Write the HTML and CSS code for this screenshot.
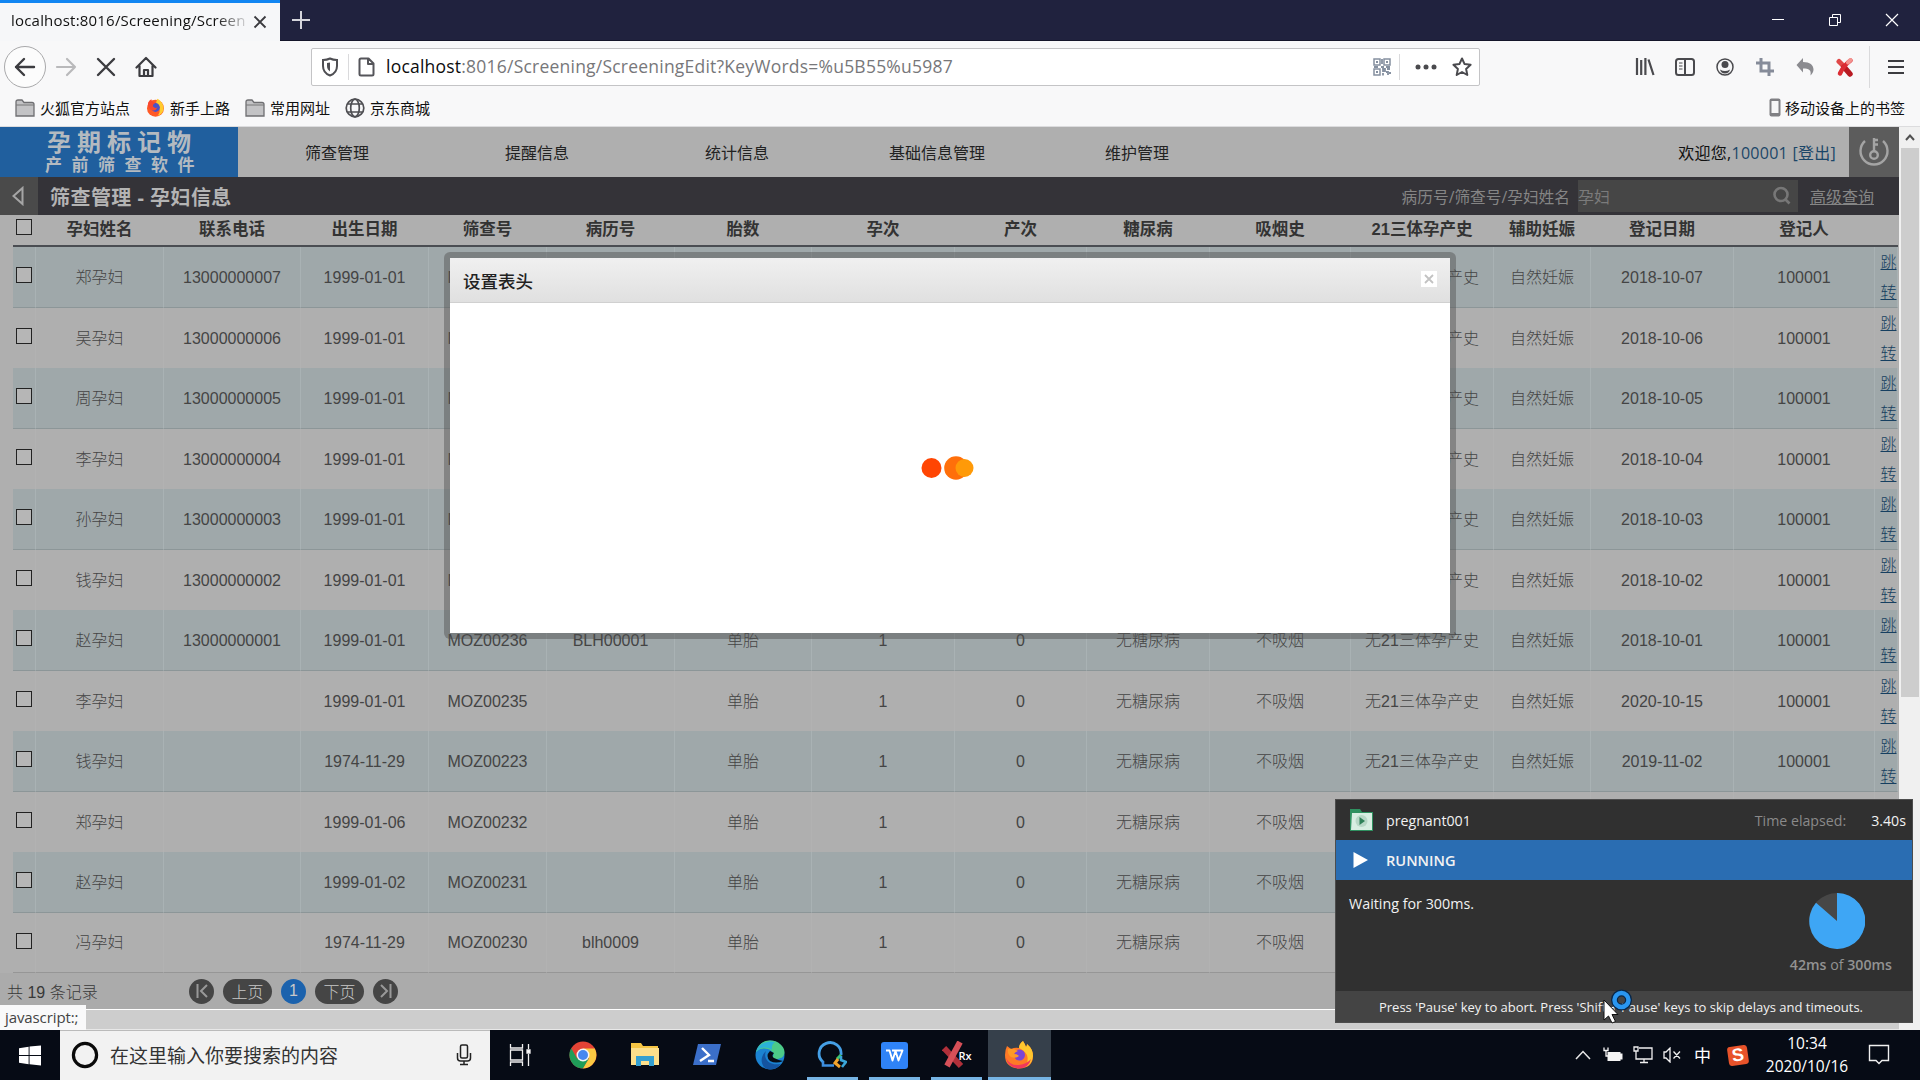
FILE: index.html
```html
<!DOCTYPE html>
<html lang="zh-CN">
<head>
<meta charset="utf-8">
<title>筛查管理 - 孕妇信息</title>
<link rel="stylesheet" href="styles.css">
</head>
<body>
<div class="desktop">
  <header class="tabbar">
    <div class="tab"><span class="tab-title">localhost:8016/Screening/Screen</span>
      <svg class="tab-close" width="14" height="14" viewBox="0 0 14 14"><path d="M1.500 1.500l11 11M12.500 1.500l-11 11" stroke="#3a3a3f" stroke-width="1.800"/></svg></div>
    <svg class="newtab" width="20" height="20" viewBox="0 0 20 20"><path d="M10 1v18M1 10h18" stroke="#d5d5dc" stroke-width="2"/></svg>
    <div class="winctl">
      <svg width="14" height="14" viewBox="0 0 14 14"><path d="M1 6.500h12" stroke="#fff"/></svg>
      <svg width="14" height="14" viewBox="0 0 14 14" fill="none" stroke="#fff"><path d="M1.500 4.500h8v8h-8zM4.500 4V1.500h8v8H10"/></svg>
      <svg width="14" height="14" viewBox="0 0 14 14"><path d="M1 1l12 12M13 1L1 13" stroke="#fff" stroke-width="1.200"/></svg>
    </div>
  </header>

  <div class="toolbar">
    <div class="navbtns">
      <span class="back"><svg width="22" height="20" viewBox="0 0 22 20" fill="none" stroke="#3c3c40" stroke-width="2.400" stroke-linecap="round" stroke-linejoin="round"><path d="M20 10H2M10 2L2 10l8 8"/></svg></span>
      <span><svg width="22" height="20" viewBox="0 0 22 20" fill="none" stroke="#b9b9bb" stroke-width="2.200" stroke-linecap="round" stroke-linejoin="round"><path d="M2 10h18M12 2l8 8-8 8"/></svg></span>
      <span><svg width="20" height="20" viewBox="0 0 20 20" fill="none" stroke="#3c3c40" stroke-width="2.400" stroke-linecap="round"><path d="M2 2l16 16M18 2L2 18"/></svg></span>
      <span><svg width="22" height="22" viewBox="0 0 22 22" fill="none" stroke="#3c3c40" stroke-width="2.200" stroke-linejoin="round" stroke-linecap="round"><path d="M1.500 11.500L11 2l9.500 9.500M4.500 10v10h13V10M9 20v-6h4v6"/></svg></span>
    </div>
    <div class="urlbar">
      <svg class="shield" width="18" height="20" viewBox="0 0 18 20" fill="none" stroke="#4e4e52" stroke-width="2"><path d="M9 1.500C7 2.500 4 3 2 3v6c0 5 3 8 7 9.500C13 17 16 14 16 9V3c-2 0-5-.5-7-1.500z"/><path d="M9 5.500v9c-2-1.500-3-3-3-5.500v-3z" fill="#4e4e52" stroke="none"/></svg>
      <i class="sep"></i>
      <svg class="doc" width="18" height="20" viewBox="0 0 18 20" fill="none" stroke="#55555a" stroke-width="2" stroke-linejoin="round"><path d="M4 1.500h7.500l5 5V17a1.500 1.500 0 0 1-1.500 1.500H4A1.500 1.500 0 0 1 2.500 17V3A1.500 1.500 0 0 1 4 1.500zM11 2v5h5"/></svg>
      <span class="url"><b>localhost</b>:8016/Screening/ScreeningEdit?KeyWords=%u5B55%u5987</span>
      <svg class="qr" width="18" height="18" viewBox="0 0 18 18" fill="none" stroke="#8590a0" stroke-width="1.500"><path d="M1 1h6v6H1zM11 1h6v6h-6zM1 11h6v6H1z"/><path d="M3 4h2M13 4h2M3 14h2M9 1v5M8 9h3M1 9h4M13 9h4M10 11h2v2h-2zM14 11h3M13 14h2v3M16 15h2M10 15v2.500" stroke-width="1.800"/></svg>
      <i class="sep"></i>
      <svg class="dots" width="22" height="6" viewBox="0 0 22 6" fill="#4a4a4e"><circle cx="3" cy="3" r="2.500"/><circle cx="11" cy="3" r="2.500"/><circle cx="19" cy="3" r="2.500"/></svg>
      <svg class="star" width="20" height="20" viewBox="0 0 20 20" fill="none" stroke="#4a4a4e" stroke-width="2" stroke-linejoin="round"><path d="M10 1.500l2.600 5.600 6 .7-4.500 4.100 1.200 6.100L10 15l-5.300 3 1.200-6.100L1.400 7.800l6-.7z"/></svg>
    </div>
    <div class="tools">
      <span><svg width="20" height="20" viewBox="0 0 20 20" stroke="#4a4a4e" stroke-width="2.200"><path d="M2 1v17M6.200 3v15M10.400 1v17M13.500 2.500l5 15.500"/></svg></span>
      <span><svg width="20" height="18" viewBox="0 0 20 18" fill="none" stroke="#4a4a4e" stroke-width="2"><rect x="1" y="1" width="18" height="16" rx="2.500"/><path d="M10 1v16"/><path d="M4 5h3.500M4 8h3.500M4 11h3.500" stroke-width="1.200"/></svg></span>
      <span><svg width="18" height="18" viewBox="0 0 18 18"><circle cx="9" cy="9" r="8" fill="none" stroke="#4a4a4e" stroke-width="1.500"/><circle cx="9" cy="6.500" r="3.500" fill="#4a4a4e"/><path d="M4 11.500q5 3 10 0-1 4-5 4t-5-4z" fill="#4a4a4e"/></svg></span>
      <span><svg width="18" height="18" viewBox="0 0 18 18" fill="none" stroke="#858b99" stroke-width="3"><path d="M5 0v13H18M0 5h13V18"/></svg></span>
      <span><svg width="18" height="18" viewBox="0 0 18 18"><path d="M7 0v4c7 0 10.500 3 10.500 7.500 0 2-1 4-3 6 1-5.500-1.500-7-7.500-7v4L.5 7z" fill="#8b8b90"/></svg></span>
      <span><svg width="18" height="20" viewBox="0 0 18 20" fill="none" stroke-linecap="round" stroke-width="5"><path d="M3 4.500L8 9.500" stroke="#e04848"/><path d="M8 10l6 7" stroke="#b81a22" stroke-width="5.500"/><path d="M14.500 3.500Q8 8 4 16.500" stroke="#dc2c34" stroke-width="4.500"/><path d="M14.500 3l-2.500 2.500" stroke="#f49490" stroke-width="4"/></svg></span>
      <i class="sep"></i>
      <svg class="burger" width="16" height="16" viewBox="0 0 16 16" stroke="#3c3c40" stroke-width="2.200"><path d="M0 2h16M0 8h16M0 14h16"/></svg>
    </div>
  </div>

  <div class="bookmarks">
    <span class="bm"><svg width="20" height="18" viewBox="0 0 20 18"><path d="M1 3q0-2 2-2h4l2 2.500h8q2 0 2 2V17H1z" fill="#c3c3c5" stroke="#6f6f72" stroke-width="1.300"/><path d="M1 6h18" stroke="#777"/></svg>火狐官方站点</span>
    <span class="bm fx"><svg width="19" height="19" viewBox="0 0 28 28"><circle cx="14" cy="15" r="12.500" fill="#ff5a26"/><path d="M17 1c4 2 9 8 9 14a12 12 0 0 1-9 11c5-6 4-12-2-15 0-4 0-7 2-10z" fill="#ffcb2e"/><circle cx="14" cy="14" r="6.500" fill="#4a52c8"/><path d="M3 7q2-4 5-5 0 4 6 5-4 2-4 5 3 4 7 2-3 6-9 4-6-4-5-11z" fill="#f9482f"/></svg>新手上路</span>
    <span class="bm f2"><svg width="20" height="18" viewBox="0 0 20 18"><path d="M1 3q0-2 2-2h4l2 2.500h8q2 0 2 2V17H1z" fill="#c3c3c5" stroke="#6f6f72" stroke-width="1.300"/><path d="M1 6h18" stroke="#777"/></svg>常用网址</span>
    <span class="bm gl"><svg width="20" height="20" viewBox="0 0 20 20" fill="none" stroke="#4f4f53" stroke-width="1.700"><circle cx="10" cy="10" r="8.800"/><ellipse cx="10" cy="10" rx="4.300" ry="8.800"/><path d="M2.500 6h15M2.500 14h15"/></svg>京东商城</span>
    <span class="bm mobile"><svg width="12" height="19" viewBox="0 0 12 19"><rect x=".5" y=".5" width="11" height="18" rx="2" fill="#808084"/><rect x="2.500" y="3" width="7" height="12" fill="#f6f6f7"/></svg>移动设备上的书签</span>
  </div>

  <div class="viewport">
    <main class="page">
      <div class="apphead">
        <div class="logo"><div class="l1">孕期标记物</div><div class="l2">产前筛查软件</div></div>
        <nav class="menu"><a>筛查管理</a><a>提醒信息</a><a>统计信息</a><a>基础信息管理</a><a>维护管理</a></nav>
        <div class="welcome">欢迎您,<a>100001 [登出]</a></div>
        <div class="keytile"><svg width="32" height="32" viewBox="0 0 32 32" fill="none" stroke="#a4a4a4" stroke-width="2.400"><path d="M7 5a13.500 13.500 0 1 0 18 0"/><circle cx="16" cy="19" r="3.800"/><path d="M16 15V2M16 4h4M16 8.500h4"/></svg></div>
      </div>
      <div class="titlebar">
        <div class="goback"><svg width="12" height="20" viewBox="0 0 12 20" fill="none" stroke="#a5a5a5" stroke-width="2"><path d="M10.500 2v16L1.500 10z"/></svg></div>
        <h1>筛查管理 - 孕妇信息</h1>
        <span class="slabel">病历号/筛查号/孕妇姓名</span>
        <div class="sbox"><span>孕妇</span><svg width="20" height="20" viewBox="0 0 20 20" fill="none" stroke="#777" stroke-width="2.600"><circle cx="9" cy="8.500" r="6.500"/><path d="M13.500 13.500l4 4"/></svg></div>
        <a class="adv">高级查询</a>
      </div>
      <table class="grid">
        <colgroup><col class="c23"><col class="c128"><col class="c137"><col class="c128"><col class="c118"><col class="c128"><col class="c137"><col class="c143"><col class="c132"><col class="c123"><col class="c141"><col class="c143"><col class="c97"><col class="c143"><col class="c141"><col class="c23"></colgroup>
        <thead><tr><th><i class="cb"></i><th>孕妇姓名<th>联系电话<th>出生日期<th>筛查号<th>病历号<th>胎数<th>孕次<th>产次<th>糖尿病<th>吸烟史<th>21三体孕产史<th>辅助妊娠<th>登记日期<th>登记人<th></tr></thead>
        <tbody>
        <tr><td><i class="cb"></i><td>郑孕妇<td>13000000007<td>1999-01-01<td>MOZ00242<td>BLH00007<td>单胎<td>1<td>0<td>无糖尿病<td>不吸烟<td>无21三体孕产史<td>自然妊娠<td>2018-10-07<td>100001<td><a>跳转</a></tr>
        <tr><td><i class="cb"></i><td>吴孕妇<td>13000000006<td>1999-01-01<td>MOZ00241<td>BLH00006<td>单胎<td>1<td>0<td>无糖尿病<td>不吸烟<td>无21三体孕产史<td>自然妊娠<td>2018-10-06<td>100001<td><a>跳转</a></tr>
        <tr><td><i class="cb"></i><td>周孕妇<td>13000000005<td>1999-01-01<td>MOZ00240<td>BLH00005<td>单胎<td>1<td>0<td>无糖尿病<td>不吸烟<td>无21三体孕产史<td>自然妊娠<td>2018-10-05<td>100001<td><a>跳转</a></tr>
        <tr><td><i class="cb"></i><td>李孕妇<td>13000000004<td>1999-01-01<td>MOZ00239<td>BLH00004<td>单胎<td>1<td>0<td>无糖尿病<td>不吸烟<td>无21三体孕产史<td>自然妊娠<td>2018-10-04<td>100001<td><a>跳转</a></tr>
        <tr><td><i class="cb"></i><td>孙孕妇<td>13000000003<td>1999-01-01<td>MOZ00238<td>BLH00003<td>单胎<td>1<td>0<td>无糖尿病<td>不吸烟<td>无21三体孕产史<td>自然妊娠<td>2018-10-03<td>100001<td><a>跳转</a></tr>
        <tr><td><i class="cb"></i><td>钱孕妇<td>13000000002<td>1999-01-01<td>MOZ00237<td>BLH00002<td>单胎<td>1<td>0<td>无糖尿病<td>不吸烟<td>无21三体孕产史<td>自然妊娠<td>2018-10-02<td>100001<td><a>跳转</a></tr>
        <tr><td><i class="cb"></i><td>赵孕妇<td>13000000001<td>1999-01-01<td>MOZ00236<td>BLH00001<td>单胎<td>1<td>0<td>无糖尿病<td>不吸烟<td>无21三体孕产史<td>自然妊娠<td>2018-10-01<td>100001<td><a>跳转</a></tr>
        <tr><td><i class="cb"></i><td>李孕妇<td><td>1999-01-01<td>MOZ00235<td><td>单胎<td>1<td>0<td>无糖尿病<td>不吸烟<td>无21三体孕产史<td>自然妊娠<td>2020-10-15<td>100001<td><a>跳转</a></tr>
        <tr><td><i class="cb"></i><td>钱孕妇<td><td>1974-11-29<td>MOZ00223<td><td>单胎<td>1<td>0<td>无糖尿病<td>不吸烟<td>无21三体孕产史<td>自然妊娠<td>2019-11-02<td>100001<td><a>跳转</a></tr>
        <tr><td><i class="cb"></i><td>郑孕妇<td><td>1999-01-06<td>MOZ00232<td><td>单胎<td>1<td>0<td>无糖尿病<td>不吸烟<td><td><td><td><td></tr>
        <tr><td><i class="cb"></i><td>赵孕妇<td><td>1999-01-02<td>MOZ00231<td><td>单胎<td>1<td>0<td>无糖尿病<td>不吸烟<td><td><td><td><td></tr>
        <tr><td><i class="cb"></i><td>冯孕妇<td><td>1974-11-29<td>MOZ00230<td>blh0009<td>单胎<td>1<td>0<td>无糖尿病<td>不吸烟<td><td><td><td><td></tr>
        </tbody>
      </table>
      <div class="pager">
        <span class="total">共 19 条记录</span>
        <span class="pg round"><svg width="12" height="14" viewBox="0 0 12 14" fill="none" stroke="#999" stroke-width="2"><path d="M1.500 0v14M11 1L5 7l6 6"/></svg></span>
        <span class="pg">上页</span><span class="pg round cur">1</span><span class="pg">下页</span>
        <span class="pg round"><svg width="12" height="14" viewBox="0 0 12 14" fill="none" stroke="#999" stroke-width="2"><path d="M10.500 0v14M1 1l6 6-6 6"/></svg></span>
      </div>
    </main>
    <div class="vscroll"><svg width="10" height="7" viewBox="0 0 10 7" fill="none" stroke="#505050" stroke-width="2"><path d="M1 6l4-4.500L9 6"/></svg><div class="thumb"></div></div>
    <div class="hscroll"></div>
    <div class="status">javascript:;</div>

    <section class="dialog">
      <div class="dlg-head"><span>设置表头</span><i class="dlg-x"><svg width="10" height="10" viewBox="0 0 10 10"><path d="M1 1l8 8M9 1L1 9" stroke="#c2c2c2" stroke-width="1.800"/></svg></i></div>
      <div class="dlg-body"><svg width="54" height="26" viewBox="0 0 54 26"><circle cx="11.500" cy="13" r="10" fill="#ff4503"/><circle cx="36" cy="13" r="11.800" fill="#ff6f0a"/><circle cx="44.500" cy="13" r="9" fill="#ff9a08"/></svg></div>
    </section>
  </div>

  <footer class="taskbar">
    <div class="start"><svg width="22" height="21" viewBox="0 0 24 22" fill="#fff"><path d="M0 3l10.500-1.500v9H0zM11.500 1.300L24 0v10.500H11.500zM0 11.500h10.500v9L0 19zM11.500 11.500H24V22l-12.500-1.500z"/></svg></div>
    <div class="search"><svg width="28" height="28" viewBox="0 0 28 28" fill="none" stroke="#0a0a0a" stroke-width="3.200"><circle cx="14" cy="14" r="11.600"/></svg><span>在这里输入你要搜索的内容</span><svg class="mic" width="16" height="22" viewBox="0 0 16 22" fill="none" stroke="#222" stroke-width="1.500"><rect x="4.500" y="1" width="7" height="13" rx="1.500"/><path d="M1.500 9v5q0 3 3 3h7q3 0 3-3V9M8 17v3.500M4 20.500h8"/></svg></div>
    <div class="apps">
      <span><svg width="22" height="22" viewBox="0 0 22 22" fill="none" stroke="#f0f0f0" stroke-width="1.300"><path d="M1.500 0v4h12V0M1.500 6h12v10h-12zM1.500 22v-4h12v4M19.500 0v5M19.500 10v12"/><path d="M18 6h3v3h-3z" fill="#fff"/></svg></span>
      <span><svg width="28" height="28" viewBox="0 0 28 28"><circle cx="14" cy="14" r="13.500" fill="#e34335"/><path d="M2.300 7.250A13.500 13.500 0 0 0 14 27.500L20 17.500 8 17.500z" fill="#1f9d58"/><path d="M14 27.500A13.500 13.500 0 0 0 25.700 7.500H14l6 10z" fill="#fbc942"/><circle cx="14" cy="14" r="6.500" fill="#f4f4f4"/><circle cx="14" cy="14" r="5" fill="#4688f1"/></svg></span>
      <span><svg width="28" height="26" viewBox="0 0 28 26"><path d="M0 1h10l2 3h15v19H0z" fill="#f6c644"/><path d="M0 6h28v17H0z" fill="#fde08b"/><path d="M5 14h18v10h-5v-5h-8v5H5z" fill="#35a0d0"/></svg></span>
      <span><svg width="30" height="24" viewBox="0 0 30 24"><path d="M6 1h23l-5 21H1z" fill="#3b6fc9"/><path d="M10 5l7 7-9 6M16 18h6" stroke="#fff" stroke-width="2.400" fill="none"/></svg></span>
      <span><svg width="30" height="30" viewBox="0 0 30 30"><circle cx="15" cy="15" r="14.500" fill="#1b83d2"/><path d="M1 12C3 4 9 .5 15 .5 24 .5 29.500 7 29.500 12c0 5-4 7-8 7-5 0-4-2-3-4C19 10 8 5 1 12z" fill="#4ccb88"/><path d="M1 12C4 3 13 0 20 2q-4 3-3 8C11 5 4 8 1 12z" fill="#2bb2d8"/><path d="M11 11c-3 7 2 15 15 13-4 5-10 6-14 5C5 26 5 16 11 11z" fill="#1454a0"/><path d="M15 11q-5 5 0 10 6 3 13 0-4-.5-9-3-3-2 0-5z" fill="#070c16"/></svg></span>
      <span class="on"><svg width="30" height="28" viewBox="0 0 30 28" fill="none"><path d="M6 21A11 11 0 1 1 24 14" stroke="#45a0e6" stroke-width="2.800"/><path d="M6 20v4.500h11" stroke="#3d8fe0" stroke-width="2.600"/><path d="M20 18l4-4" stroke="#3bc36e" stroke-width="3"/><path d="M21 18l-3 4 5 4" stroke="#f3a32c" stroke-width="3"/><path d="M24 15v4l5 2-4 5" stroke="#3aa6d8" stroke-width="2.600"/></svg></span>
      <span class="on"><svg width="27" height="27" viewBox="0 0 27 27"><rect width="27" height="27" rx="3" fill="#2f83f7"/><path d="M5 8.500h3.500l3 10L14.500 9l3 9.500 4-10H11" stroke="#fff" stroke-width="1.900" fill="none" stroke-linejoin="round"/></svg></span>
      <span class="on rx"><svg width="24" height="28" viewBox="0 0 24 28" stroke-linecap="butt" stroke-width="6"><path d="M2 7l17 18" stroke="#b0303a"/><path d="M18 1L5 25" stroke="#d65058"/></svg><b>Rx</b></span>
      <span class="on active"><svg width="30" height="28" viewBox="0 0 30 28"><path d="M3 5l4 3q4-2 8-1Q15 3 19 0q2 3 3 6 1-1 1-3 6 5 6 12 0 12-14 12.500Q1 27 1 14q0-5 2-9z" fill="#ff7a26"/><path d="M19 0q2 3 3 6 1-1 1-3 6 5 6 12-1 9-8 11 4-6 2-12-3-5-8-7 0-4 4-7z" fill="#ffc62e"/><path d="M2 17q4 8 13 7 8-1 12-6-2 9-12 9.500Q4 27 2 17z" fill="#f2385c"/><circle cx="15.500" cy="14" r="5.500" fill="#7a45d4"/><path d="M4 8q5-1 10 2-3 1-4 3 4 0 5 2-4 3-8 1-4-3-3-8z" fill="#ff9a26"/></svg></span>
    </div>
    <div class="tray">
      <svg class="t1" width="16" height="10" viewBox="0 0 16 10" fill="none" stroke="#e8e8e8" stroke-width="1.500"><path d="M1 9l7-7.500L15 9"/></svg>
      <svg class="t2" width="20" height="16" viewBox="0 0 20 16"><path d="M4.500 5h13v1.500h2v6h-2V14h-13z" fill="#f4f4f4"/><path d="M1 .5v3h4v-3M3 4v5h2" fill="none" stroke="#f4f4f4" stroke-width="1.300"/></svg>
      <svg class="t3" width="20" height="18" viewBox="0 0 20 18" fill="none" stroke="#f0f0f0" stroke-width="1.300"><path d="M6 2h13v11H3V8M11 13v3M7 16.500h8M1 1h4v4H1zM3 5v4"/></svg>
      <svg class="t4" width="18" height="16" viewBox="0 0 18 16" fill="none" stroke="#f0f0f0" stroke-width="1.300"><path d="M1 5h2l4-4v14l-4-4H1zM10.500 4.500l6.500 7M17 4.500l-6.500 7"/></svg>
      <span class="ime">中</span>
      <span class="sogou">S</span>
      <div class="clock"><div>10:34</div><div>2020/10/16</div></div>
      <svg class="note" width="22" height="22" viewBox="0 0 22 22" fill="none" stroke="#f0f0f0" stroke-width="1.400"><path d="M1.500 1.500h19v15H14l-3 3-3-3H1.500z"/></svg>
    </div>
  </footer>

  <aside class="runner">
    <div class="r-top"><svg width="23" height="22" viewBox="0 0 23 22"><path d="M0 0h10l2 3h11v19H0z" fill="#2f9160"/><path d="M2 4h20v17H1z" fill="#d8eee2"/><circle cx="11.500" cy="12" r="6" fill="#b8d8c7"/><path d="M9.500 8l5.500 4-5.500 4z" fill="#2f8058"/></svg><span class="r-name">pregnant001</span><span class="r-el">Time elapsed:</span><span class="r-time">3.40s</span></div>
    <div class="r-run"><svg width="15" height="16" viewBox="0 0 15 15" preserveAspectRatio="none"><path d="M.5 0L15 7.500.5 15z" fill="#fff"/></svg><span>RUNNING</span></div>
    <div class="r-body"><span class="r-wait">Waiting for 300ms.</span><div class="r-prog"><svg width="56" height="56" viewBox="0 0 56 56"><circle cx="28" cy="28" r="28" fill="#474747"/><path d="M28 28V0A28 28 0 1 1 7 9.800z" fill="#3ea6f5"/></svg><span>42ms <em>of</em> 300ms</span></div></div>
    <div class="r-foot">Press 'Pause' key to abort. Press 'Shift + Pause' keys to skip delays and timeouts.</div>
  </aside>
  <svg class="cursor" width="32" height="36" viewBox="0 0 32 36"><circle cx="19.500" cy="11" r="7" fill="none" stroke="#082647" stroke-width="7"/><circle cx="19.500" cy="11" r="7" fill="none" stroke="#2a96f0" stroke-width="4.500"/><path d="M2 11v20l4.500-4 3.500 7 3.500-1.500-3.500-7h6z" fill="#fff" stroke="#111"/></svg>
</div>
</body>
</html>
```
FILE: styles.css
```css
* { box-sizing: border-box; }
body { margin: 0; background: #000; overflow: hidden; }
svg { display: block; flex: none; }
.desktop { width: 1920px; height: 1080px; position: relative; display: flex; flex-direction: column; overflow: hidden; font-family: "Open Sans", "Noto Sans CJK SC", sans-serif; font-size: 16px; color: #111; white-space: nowrap; }

/* browser chrome */
.tabbar { height: 41px; background: #20223e; display: flex; align-items: center; border-bottom: 1px solid #14152a; }
.tab { width: 280px; height: 41px; margin-bottom: -1px; background: #f6f7f9; border-top: 3px solid #1186f2; display: flex; align-items: center; padding: 0 13px 1px 11px; gap: 8px; }
.tab-title { width: 234px; font-size: 15px; letter-spacing: .2px; padding-bottom: 3px; -webkit-mask-image: linear-gradient(90deg, #000 205px, transparent 240px); mask-image: linear-gradient(90deg, #000 205px, transparent 240px); }
.newtab { margin-left: 11px; }
.winctl { margin-left: auto; display: flex; gap: 43px; padding-right: 21px; }
.toolbar { height: 51px; background: #f8f8f9; display: flex; align-items: center; }
.navbtns { width: 311px; padding-left: 4px; display: flex; align-items: center; }
.navbtns span { width: 40px; height: 42px; display: flex; align-items: center; justify-content: center; }
.navbtns .back { width: 42px; border: 1px solid #a9a9ab; border-radius: 50%; background: #fcfcfc; }
.urlbar { width: 1169px; height: 38px; background: #fff; border: 1px solid #c4c4c6; border-radius: 2px; display: flex; align-items: center; padding: 0 7px 0 9px; }
.sep { width: 1px; height: 26px; background: #dadadc; }
.shield { margin-right: 9px; }
.doc { margin-left: 8px; }
.url { margin-left: 11px; flex: 1; font-size: 17.500px; line-height: 34px; padding-bottom: 1px; color: #77777a; letter-spacing: .22px; }
.url b { font-weight: 400; color: #0c0c0d; }
.qr { margin-right: 8px; }
.dots { margin: 0 15px; }
.tools { display: flex; align-items: center; padding-left: 145px; }
.tools span { width: 40px; display: flex; justify-content: center; }
.tools .sep { height: 42px; margin: 0 18px 0 4px; }
.bookmarks { height: 35px; background: #f8f8f9; border-bottom: 1px solid #dcdcde; display: flex; align-items: center; padding: 0 15px 3px 15px; font-size: 15px; }
.bm { display: flex; align-items: center; gap: 5px; }
.fx { margin-left: 16px; }
.f2, .gl { margin-left: 15px; }
.mobile { margin-left: auto; gap: 4px; }

/* page area */
.viewport { height: 903px; position: relative; display: grid; grid-template: 882px 21px / 1899px 21px; }
.page { background: #afafaf; overflow: hidden; display: flex; flex-direction: column; }
.apphead { height: 50px; flex: none; display: flex; align-items: center; }
.logo { width: 238px; height: 50px; background: #205f9e; color: #b4bac0; font-weight: 700; text-align: center; padding-top: 2px; }
.l1 { font-size: 24px; line-height: 26px; letter-spacing: 6px; padding-left: 6px; }
.l2 { font-size: 17px; line-height: 19px; letter-spacing: 9.500px; padding-left: 11px; }
.menu { display: flex; margin-left: -1px; }
.menu a { width: 200px; text-align: center; color: #222; }
.welcome { margin-left: auto; padding-right: 13px; letter-spacing: .27px; }
.welcome a { color: #1b4668; }
.keytile { width: 50px; height: 50px; background: #5c5c5c; display: grid; place-items: center; padding-bottom: 1px; }
.titlebar { height: 38px; flex: none; background: #343338; display: flex; align-items: center; color: #858585; }
.goback { width: 38px; height: 38px; background: #4a4a4a; display: grid; place-items: center; padding-right: 2px; }
h1 { margin: 3px auto 0 12px; font-size: 20px; line-height: 35px; letter-spacing: .45px; color: #b4b4b4; }
.slabel { font-size: 15.700px; margin-right: 8px; }
.sbox { width: 220px; height: 32px; background: #464646; display: flex; align-items: center; justify-content: space-between; padding-right: 6px; color: #7b7b7b; }
.adv { text-decoration: underline; margin: 0 25px 0 12px; }
.grid { width: 1885px; margin-left: 13px; flex: none; table-layout: fixed; border-collapse: separate; border-spacing: 0; font-family: "Liberation Sans", "Noto Sans CJK SC", sans-serif; color: #444; text-align: center; }
.c23 { width: 23px; } .c97 { width: 97px; } .c118 { width: 118px; } .c123 { width: 123px; } .c128 { width: 128px; } .c132 { width: 132px; } .c137 { width: 137px; } .c141 { width: 141px; } .c143 { width: 143px; }
th, td { padding: 0; white-space: nowrap; }
th { height: 32px; font-size: 16.500px; line-height: 20px; padding-bottom: 2px; padding-right: 1px; color: #333; border-bottom: 2px solid #4a4d52; }
td { height: 60px; line-height: 30px; padding-top: 1px; font-weight: 300; }
tr > :first-child { text-align: left; padding-left: 3px; padding-top: 0; }
tbody tr:nth-child(odd) td { height: 61px; background: #9fa8aa; border-bottom: 1px solid #8c9698; border-right: 1px solid #a9b2b4; }
tbody tr:nth-child(even) td { border-right: 1px solid #b2b2b2; }
tbody tr:last-child td { border-bottom: 1px solid #969696; }
tr td:last-child { white-space: normal; word-break: break-all; padding: 0; }
td a { display: block; width: 17px; margin: 1px 0 -1px 5px; color: #163f60; text-decoration: underline; }
.cb { display: block; width: 16px; height: 16px; border: 1px solid #222; background: #b6b6b6; margin-top: -4px; }
.pager { flex: 1; display: flex; align-items: center; padding-left: 7px; font-family: "Liberation Sans", "Noto Sans CJK SC", sans-serif; color: #383838; background: #ababab; gap: 9px; font-weight: 300; }
.total { width: 173px; }
.pg { height: 25px; width: 49px; border-radius: 13px; background: #454545; color: #c8c8c8; display: flex; align-items: center; justify-content: center; }
.round { width: 25px; }
.cur { background: #1b62ad; }
.vscroll { grid-row: 1 / 3; grid-column: 2; background: #f0f0f0; display: flex; flex-direction: column; align-items: center; padding-top: 7px; }
.thumb { width: 18px; height: 549px; margin-top: 7px; background: #cdcdcd; }
.hscroll { grid-row: 2; grid-column: 1; background: #cdcdcd; border-top: 1px solid #fff; border-bottom: 1px solid #e8e8e8; }
.status { position: absolute; left: 0; bottom: 0; width: 86px; height: 25px; background: #f9f9fa; color: #444; font-size: 15px; line-height: 25px; padding-left: 5px; letter-spacing: -.1px; }

.dialog { position: absolute; left: 444px; top: 125px; width: 1012px; height: 387px; border: 6px solid rgba(80, 80, 80, .45); border-radius: 6px; background: #fff; background-clip: padding-box; display: flex; flex-direction: column; }
.dlg-head { height: 45px; background: linear-gradient(#f0f0f0, #e0e0e0); border-bottom: 1px solid #d0d0d0; display: flex; align-items: center; justify-content: space-between; padding: 1px 13px 0 13px; font-size: 17.500px; font-weight: 500; color: #222; }
.dlg-x { width: 16px; height: 16px; background: #fff; display: grid; place-items: center; margin-bottom: 4px; }
.dlg-body { flex: 1; display: flex; justify-content: center; padding-top: 152px; padding-right: 7px; }

/* taskbar */
.taskbar { height: 50px; background: #060b15; display: flex; align-items: center; color: #fff; }
.start { width: 60px; display: flex; justify-content: center; }
.search { width: 430px; height: 50px; background: #f2f2f2; border-top: 1px solid #bbb; display: flex; align-items: center; padding: 0 18px 1px 11px; color: #333; font-size: 19px; gap: 11px; }
.mic { margin-left: auto; }
.apps { display: flex; margin-left: -1px; }
.apps span { width: 62.400px; height: 50px; display: flex; align-items: center; justify-content: center; }
.apps .on { background: linear-gradient(#76b4e4, #76b4e4) 50% 100% / 51px 3px no-repeat; }
.apps .active { background: linear-gradient(#76b4e4, #76b4e4) 0 100% / 100% 3px no-repeat #36404b; }
.rx b { margin-left: -8px; font: 600 11px "Open Sans", sans-serif; }
.tray { margin-left: auto; display: flex; align-items: center; }
.t1 { margin-right: 12px; } .t2 { margin-right: 10px; } .t3 { margin-right: 10px; }
.t4 { margin-right: 13px; }
.ime { font-size: 17px; width: 18px; margin-right: 16px; padding-bottom: 2px; }
.sogou { width: 20px; height: 19px; background: #e8532a; border-radius: 3px; font: 900 18px/19px "Liberation Sans", sans-serif; text-align: center; transform: rotate(-8deg); }
.clock { width: 118px; text-align: center; font-size: 15.500px; line-height: 23px; }
.note { margin: 0 30px 0 2px; }

/* automation panel */
.runner { position: absolute; left: 1335px; top: 799px; width: 578px; height: 224px; background: #303030; border: 1px solid #4d4d4d; color: #f2f2f2; font-size: 14px; display: flex; flex-direction: column; }
.r-top { height: 40px; display: flex; align-items: center; padding: 0 6px 0 14px; font-size: 14.200px; }
.r-name { margin-left: 13px; }
.r-el { margin-left: auto; color: #8a8a8a; margin-right: 25px; }
.r-run { height: 40px; background: #2a6db2; display: flex; align-items: center; padding-left: 17px; gap: 18px; font-weight: 600; font-size: 14.600px; }
.r-body { flex: 1; display: flex; justify-content: space-between; padding: 13px 20px 0 13px; }
.r-wait { padding-top: 1px; font-size: 14.300px; }
.r-prog { display: flex; flex-direction: column; color: #929292; font-weight: 600; gap: 6px; font-size: 14.200px; }
.r-prog svg { margin-left: 19px; }
.r-prog em { font-style: normal; font-weight: 400; }
.r-foot { height: 31px; background: #444; font-size: 13px; line-height: 32px; text-align: center; padding-right: 6px; }
.cursor { position: absolute; left: 1602px; top: 989px; }
```
